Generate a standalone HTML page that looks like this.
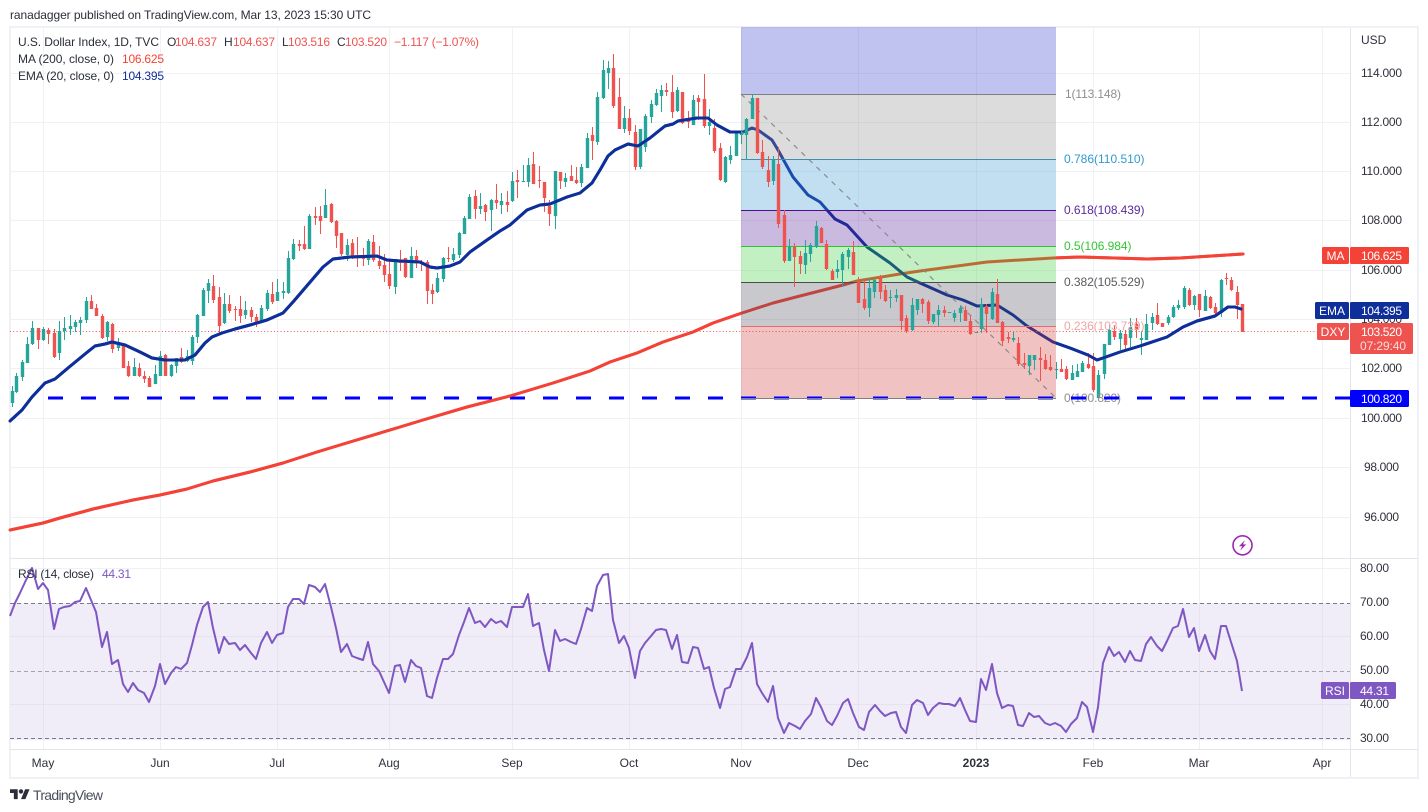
<!DOCTYPE html>
<html lang="en">
<head>
<meta charset="utf-8">
<title>U.S. Dollar Index chart</title>
<style>
html,body{margin:0;padding:0;background:#fff;width:1428px;height:812px;overflow:hidden}
svg{display:block}
text{font-family:"Liberation Sans",sans-serif;font-size:12px;fill:#2a2e39}
.ax{fill:#2f323c}
.w{fill:#fff;text-anchor:middle}
.t{text-anchor:middle;fill:#2f323c}
</style>
</head>
<body>
<svg width="1428" height="812" viewBox="0 0 1428 812" xmlns="http://www.w3.org/2000/svg">
<defs>
<path id="ma" fill="none" stroke="#f44336" stroke-width="3" stroke-linejoin="round" stroke-linecap="round" d="M10 530L43 523L60 518L93 509L133 500L160 495L187 489L213 481L250 472L283 463L317 452L350 442L400 427L423 420L467 407L510 396L553 383L590 371L610 362L637 353L663 342L693 332L713 323L742 313L773 303L800 296L843 285L857 281L900 274L920 271L987 262L1053 258L1080 257L1147 259L1180 258L1243 254"/>
<path id="ema" fill="none" stroke="#0e2f9a" stroke-width="3" stroke-linejoin="round" stroke-linecap="round" d="M10 421L22 410L32 397L45 383L55 379L68 368L85 354L95 346L105 344L112 342L125 345L140 352L152 358L165 360L185 360L195 355L205 343L212 337L222 333L235 329L250 325L267 320L283 313L293 302L305 288L323 267L333 259L350 257L377 256L387 260L400 261L420 262L430 267L437 268L450 266L460 262L470 252L487 240L500 231L510 225L527 210L540 205L550 204L567 197L580 193L592 183L600 170L608 156L615 150L628 144L638 146L650 138L665 126L673 124L678 121L697 118L708 118L717 125L730 132L743 132L752 128L758 130L772 140L778 150L793 177L808 195L820 202L835 219L847 225L867 247L890 263L907 277L920 283L947 295L963 300L977 306L997 305L1013 315L1027 326L1053 342L1070 348L1088 355L1097 360L1103 358L1120 352L1140 346L1167 337L1183 327L1197 321L1215 316L1228 307L1235 307L1241 309"/>
<clipPath id="out"><path d="M10 27H741V558H10ZM1056 27H1350V558H1056Z"/></clipPath>
</defs>

<rect width="1428" height="812" fill="#fff"/>
<text x="10" y="19" textLength="361" lengthAdjust="spacing" fill="#2a2e39">ranadagger published on TradingView.com, Mar 13, 2023 15:30 UTC</text>

<!-- frame -->
<rect x="10" y="27" width="1408" height="751" fill="#fff" stroke="#f0f1f7" stroke-width="2"/>

<!-- grid -->
<path fill="none" stroke="#f0f1f5" stroke-width="1" d="M10 73.5H1350M10 122.5H1350M10 171.5H1350M10 220.5H1350M10 270.5H1350M10 319.5H1350M10 368.5H1350M10 418.5H1350M10 467.5H1350M10 517.5H1350M43.5 28V749M160.5 28V749M277.5 28V749M389.5 28V749M512.5 28V749M629.5 28V749M741.5 28V749M858.5 28V749M976.5 28V749M1093.5 28V749M1199.5 28V749M1322.5 28V749M10 568.5H1350"/>

<!-- RSI band -->
<rect x="10" y="603" width="1340" height="137" fill="#f0ecf8"/>
<path fill="none" stroke="#e6e2ee" stroke-width="1" d="M10 636.5H1350M10 704.5H1350M43.5 603V740M160.5 603V740M277.5 603V740M389.5 603V740M512.5 603V740M629.5 603V740M741.5 603V740M858.5 603V740M976.5 603V740M1093.5 603V740M1199.5 603V740M1322.5 603V740"/>
<path fill="none" stroke="#787b86" stroke-width="1" stroke-dasharray="4 3" d="M10 603.5H1350M10 738.5H1350"/>
<path fill="none" stroke="#a5a5ae" stroke-width="1" stroke-dasharray="4 3" d="M10 671.5H1350"/>

<!-- MA / EMA under fib -->
<use href="#ma"/>
<use href="#ema"/>

<!-- fib fills -->
<rect x="741" y="27" width="315" height="67" fill="rgb(48,55,201)" fill-opacity=".3"/>
<rect x="741" y="94" width="315" height="65" fill="rgb(138,138,138)" fill-opacity=".3"/>
<rect x="741" y="159" width="315" height="51" fill="rgb(52,148,212)" fill-opacity=".3"/>
<rect x="741" y="210" width="315" height="36" fill="rgb(82,28,148)" fill-opacity=".3"/>
<rect x="741" y="246" width="315" height="36" fill="rgb(52,205,52)" fill-opacity=".3"/>
<rect x="741" y="282" width="315" height="44" fill="rgb(72,72,88)" fill-opacity=".3"/>
<rect x="741" y="326" width="315" height="72" fill="rgb(205,52,52)" fill-opacity=".3"/>

<!-- dotted last price -->
<path fill="none" stroke="#ef5350" stroke-width="1" stroke-dasharray="1 2.3" d="M10 331.5H1350"/>

<!-- blue support -->
<path fill="none" stroke="#0000ff" stroke-width="3" stroke-dasharray="15 18" d="M48 398H1350"/>

<!-- fib lines -->
<path fill="none" stroke="#808080" stroke-width="1" d="M741 94.5H1056"/>
<path fill="none" stroke="#3d8fb8" stroke-width="1" d="M741 159.5H1056"/>
<path fill="none" stroke="#4a0f91" stroke-width="1" d="M741 210.5H1056"/>
<path fill="none" stroke="#2cc62c" stroke-width="1" d="M741 246.5H1056"/>
<path fill="none" stroke="#4a4a50" stroke-width="1" d="M741 282.5H1056"/>
<path fill="none" stroke="#e86b6b" stroke-width="1" d="M741 326.5H1056"/>
<path fill="none" stroke="#808080" stroke-width="1" d="M741 398.5H1056"/>
<path fill="none" stroke="#8a8a8a" stroke-width="1.2" stroke-dasharray="5 5.5" d="M741 94L1056 398"/>

<!-- green wicks -->
<path fill="none" stroke="#26a69a" stroke-width="1" d="M12.5 386V407M16.5 373V393M22.5 360V381M27.5 337V363M32.5 321V345M43.5 327V341M59.5 321V360M64.5 317V340M70.5 315V335M75.5 320V332M80.5 317V335M86.5 297V323M107.5 321V341M118.5 338V351M134.5 358V376M155.5 365V384M160.5 351V376M171.5 364V377M176.5 358V373M187.5 350V362M192.5 335V365M197.5 314V343M203.5 288V316M208.5 279V303M224.5 293V324M245.5 301V319M261.5 305V323M267.5 290V311M277.5 279V301M283.5 282V299M288.5 251V294M293.5 239V260M309.5 214V249M325.5 189V218M347.5 239V261M368.5 239V265M395.5 262V294M411.5 247V278M437.5 273V293M443.5 257V282M453.5 248V262M459.5 232V258M464.5 216V234M469.5 194V219M480.5 193V214M491.5 199V231M501.5 193V214M512.5 172V202M523.5 165V182M528.5 158V187M555.5 171V229M565.5 173V187M581.5 164V187M587.5 133V168M597.5 92V145M603.5 60V99M608.5 61V89M624.5 106V133M640.5 129V169M645.5 114V152M651.5 100V123M656.5 89V106M661.5 85V112M677.5 87V112M693.5 95V125M709.5 109V135M725.5 156V183M730.5 146V164M736.5 131V156M741.5 130V144M746.5 118V160M752.5 94V119M773.5 156V185M789.5 239V261M805.5 240V274M810.5 243V262M816.5 221V248M837.5 260V278M842.5 252V287M848.5 248V269M869.5 278V317M874.5 279V298M890.5 290V308M896.5 289V302M912.5 298V331M917.5 299V315M933.5 314V324M938.5 305V326M954.5 310V322M960.5 306V322M981.5 298V333M992.5 288V320M1013.5 332V342M1029.5 355V375M1034.5 355V370M1056.5 362V379M1072.5 365V380M1077.5 364V377M1082.5 361V372M1098.5 370V398M1104.5 344V379M1109.5 325V345M1120.5 330V350M1130.5 318V347M1141.5 331V355M1146.5 314V340M1152.5 313V330M1168.5 315V325M1173.5 305V318M1178.5 300V310M1184.5 286V309M1194.5 295V310M1205.5 290V311M1221.5 279V317"/>
<!-- green bodies -->
<path fill="none" stroke="#26a69a" stroke-width="3.4" d="M12.5 391V403M16.5 376V392M22.5 362V377M27.5 344V363M32.5 328V344M43.5 329V340M59.5 331V353M64.5 328V331M70.5 326V329M75.5 322V327M80.5 320V323M86.5 301V320M107.5 322V337M118.5 344V348M134.5 367V376M155.5 374V384M160.5 356V376M171.5 365V376M176.5 358V366M187.5 356V361M192.5 337V361M197.5 315V337M203.5 290V316M208.5 283V291M224.5 304V323M245.5 310V315M261.5 308V322M267.5 293V309M277.5 292V301M283.5 291V293M288.5 258V293M293.5 244V259M309.5 216V249M325.5 205V218M347.5 245V255M368.5 241V260M395.5 262V287M411.5 256V278M437.5 278V292M443.5 258V279M453.5 254V260M459.5 233V255M464.5 218V234M469.5 197V219M480.5 206V209M491.5 200V210M501.5 201V205M512.5 181V201M523.5 181V182M528.5 165V182M555.5 171V216M565.5 178V182M581.5 167V183M587.5 138V168M597.5 97V142M603.5 70V98M608.5 68V73M624.5 118V129M640.5 129V167M645.5 116V147M651.5 104V117M656.5 93V105M661.5 90V96M677.5 90V111M693.5 100V125M709.5 122V126M725.5 157V182M730.5 155V160M736.5 131V156M741.5 132V135M746.5 119V135M752.5 98V119M773.5 160V181M789.5 247V261M805.5 253V265M810.5 245V254M816.5 226V247M837.5 269V272M842.5 254V270M848.5 250V257M869.5 288V308M874.5 280V292M890.5 297V298M896.5 295V298M912.5 305V330M917.5 299V310M933.5 314V322M938.5 310V315M949.5 312V313M954.5 313V318M960.5 308V313M976.5 332V333M981.5 304V329M992.5 292V319M1013.5 338V340M1029.5 355V366M1034.5 355V360M1056.5 369V370M1072.5 373V380M1077.5 371V377M1082.5 363V372M1098.5 375V398M1104.5 344V374M1109.5 330V345M1120.5 333V339M1130.5 327V338M1141.5 338V340M1146.5 324V340M1152.5 317V323M1168.5 317V323M1173.5 307V317M1178.5 305V308M1184.5 288V307M1194.5 296V305M1205.5 296V311M1221.5 280V313"/>
<!-- red wicks -->
<path fill="none" stroke="#ef5350" stroke-width="1" d="M38.5 328V349M48.5 328V344M54.5 329V358M91.5 295V309M96.5 304V316M102.5 314V339M112.5 323V353M123.5 344V368M128.5 361V377M139.5 363V377M144.5 371V383M149.5 376V387M165.5 354V376M181.5 348V363M213.5 275V303M219.5 287V333M229.5 295V313M235.5 306V321M240.5 296V323M251.5 307V322M256.5 314V327M272.5 282V304M299.5 240V251M304.5 226V250M315.5 207V225M320.5 206V234M331.5 203V223M336.5 220V248M341.5 233V256M352.5 239V259M357.5 237V267M363.5 248V266M373.5 235V262M379.5 246V269M384.5 254V282M389.5 260V289M400.5 250V271M405.5 258V278M416.5 250V268M421.5 260V271M427.5 260V304M432.5 284V304M448.5 247V262M475.5 190V219M485.5 204V221M496.5 184V209M507.5 191V212M517.5 170V198M533.5 152V184M539.5 166V188M544.5 182V212M549.5 200V226M560.5 172V189M571.5 165V181M576.5 167V184M592.5 127V160M613.5 54V108M619.5 78V129M629.5 109V135M635.5 125V170M666.5 83V96M672.5 75V118M682.5 92V124M688.5 111V128M698.5 95V120M704.5 74V128M714.5 119V153M720.5 143V181M757.5 98V154M762.5 140V169M768.5 156V187M778.5 147V228M784.5 210V263M794.5 243V287M800.5 251V274M821.5 227V243M826.5 240V270M832.5 269V280M853.5 241V275M858.5 277V303M864.5 279V310M880.5 275V299M885.5 285V302M901.5 295V330M906.5 315V333M922.5 298V313M928.5 300V324M944.5 306V317M965.5 306V321M970.5 315V335M986.5 304V333M997.5 279V323M1002.5 321V346M1008.5 332V343M1018.5 337V366M1024.5 353V369M1040.5 347V381M1045.5 354V370M1050.5 355V371M1061.5 359V372M1066.5 366V380M1088.5 353V369M1093.5 353V392M1114.5 325V340M1125.5 330V352M1136.5 318V338M1157.5 303V325M1162.5 323V327M1189.5 288V306M1199.5 294V317M1210.5 296V309M1215.5 303V314M1226.5 273V285M1231.5 277V291M1237.5 286V319M1242.5 304V332"/>
<!-- red bodies -->
<path fill="none" stroke="#ef5350" stroke-width="3.4" d="M38.5 328V340M48.5 330V334M54.5 333V357M91.5 301V309M96.5 308V316M102.5 316V338M112.5 324V349M123.5 344V368M128.5 366V376M139.5 368V376M144.5 376V379M149.5 378V387M165.5 355V376M181.5 357V362M213.5 286V300M219.5 297V326M229.5 304V311M235.5 309V310M240.5 309V316M251.5 310V317M256.5 317V323M272.5 294V302M299.5 244V246M304.5 244V249M315.5 216V218M320.5 216V221M331.5 204V222M336.5 221V236M341.5 233V254M352.5 243V257M357.5 256V258M363.5 257V259M373.5 242V260M379.5 261V266M384.5 265V275M389.5 274V286M400.5 260V263M405.5 258V277M416.5 256V263M421.5 262V264M427.5 262V291M432.5 290V294M448.5 258V259M475.5 196V209M485.5 205V212M496.5 200V203M507.5 202V205M517.5 180V182M533.5 164V184M539.5 180V181M544.5 182V198M549.5 206V214M560.5 172V181M571.5 176V181M576.5 180V183M592.5 135V141M613.5 68V106M619.5 97V129M629.5 118V131M635.5 132V167M666.5 90V92M672.5 92V112M682.5 92V123M688.5 119V122M698.5 98V102M704.5 99V126M714.5 128V151M720.5 148V180M757.5 98V153M762.5 152V167M768.5 170V182M778.5 164V224M784.5 215V261M794.5 247V257M800.5 256V264M821.5 228V243M826.5 244V269M832.5 271V280M853.5 252V275M858.5 282V303M864.5 299V308M880.5 276V292M885.5 290V301M901.5 295V321M906.5 318V331M922.5 299V304M928.5 302V321M944.5 310V313M965.5 310V321M970.5 321V334M986.5 306V314M997.5 294V323M1002.5 322V341M1008.5 337V339M1018.5 343V364M1024.5 363V365M1040.5 358V360M1045.5 360V369M1050.5 367V370M1061.5 369V372M1066.5 369V379M1088.5 364V368M1093.5 366V390M1114.5 331V337M1125.5 334V345M1136.5 324V330M1157.5 315V324M1162.5 323V327M1189.5 290V305M1199.5 294V310M1210.5 297V308M1215.5 307V313M1226.5 278V279M1231.5 280V290M1237.5 292V305M1242.5 304V332"/>

<!-- MA / EMA on top outside fib -->
<g clip-path="url(#out)">
<use href="#ma"/>
<use href="#ema"/>
</g>

<!-- fib labels -->
<text x="1065" y="98" textLength="56" fill="#8f8f8f" style="fill:#8f8f8f">1(113.148)</text>
<text x="1064" y="163" textLength="80.5" style="fill:#2f9bd0">0.786(110.510)</text>
<text x="1064" y="214" textLength="80.5" style="fill:#5a2a9a">0.618(108.439)</text>
<text x="1064" y="250" textLength="67.5" style="fill:#35c535">0.5(106.984)</text>
<text x="1064" y="286" textLength="80.5" style="fill:#5a5a60">0.382(105.529)</text>
<text x="1064" y="330" textLength="80.5" style="fill:#f0a5a5">0.236(103.729)</text>
<text x="1064" y="402" textLength="57" style="fill:#8f8f8f">0(100.820)</text>
<path fill="none" stroke="#0000ff" stroke-width="3" d="M1071 398H1086M1104 398H1119"/>

<!-- lightning -->
<circle cx="1242.5" cy="545.3" r="9.5" fill="none" stroke="#9c27b0" stroke-width="1.6"/>
<path d="M1244.8 540.2L1239 546.2H1242.2L1240.2 550.6L1246.2 544.4H1243Z" fill="#9c27b0"/>

<!-- RSI -->
<path fill="none" stroke="#7e57c2" stroke-width="2" stroke-linejoin="round" d="M10 616L15 603L20 593L26 580L32 568L38 589L43 583L48 590L54 629L59 609L64 607L70 606L75 602L80 601L86 588L91 600L96 612L102 647L107 632L112 664L118 660L123 684L128 692L133 683L138 690L144 693L149 702L155 686L160 664L165 684L171 673L176 667L181 669L187 663L192 645L197 625L203 607L208 602L213 628L219 653L224 637L229 644L235 643L240 650L245 645L251 653L256 659L261 643L267 632L272 643L277 635L283 633L288 607L293 599L299 599L304 604L309 585L315 587L320 592L325 584L331 607L336 628L341 652L347 644L352 656L357 658L363 660L368 642L373 664L379 671L384 682L389 693L395 666L400 665L405 682L411 660L416 666L421 668L427 696L432 698L437 678L443 659L448 659L453 654L459 635L464 622L469 608L475 623L480 621L485 627L491 619L496 623L501 621L507 627L512 607L517 607L523 607L528 594L533 626L539 623L544 650L549 671L555 630L560 641L565 639L571 642L576 644L581 629L587 608L592 611L597 586L603 575L608 574L613 620L619 643L624 636L629 648L635 678L640 651L645 643L651 636L656 630L661 629L666 630L672 649L677 635L682 662L688 663L693 647L698 648L704 669L709 667L714 688L720 708L725 689L730 687L736 669L741 669L747 657L752 643L757 684L762 693L768 702L773 686L778 718L784 733L789 723L795 726L800 729L805 721L811 714L816 698L821 707L827 721L832 725L837 716L843 703L848 699L853 713L859 727L864 730L869 712L875 705L880 711L885 716L891 713L896 712L901 727L906 733L912 705L917 700L923 703L928 715L933 708L939 703L944 704L949 704L955 706L960 698L965 710L970 721L976 722L981 679L986 690L992 664L997 693L1002 708L1008 705L1013 706L1018 725L1023 726L1029 713L1034 717L1039 716L1045 723L1050 725L1055 723L1061 726L1066 732L1071 724L1077 718L1082 702L1087 707L1093 732L1098 707L1103 663L1109 647L1114 656L1119 652L1125 662L1130 651L1135 660L1141 661L1146 644L1151 637L1157 646L1162 651L1167 641L1173 628L1178 626L1183 609L1189 637L1194 628L1199 651L1205 635L1210 651L1215 659L1221 626L1226 626L1231 642L1237 661L1242 691"/>

<!-- separators -->
<path fill="none" stroke="#e3e4ec" stroke-width="1" d="M10 558.5H1418M10 749.5H1418M1350.5 28V777"/>

<!-- legend -->
<text x="18" y="46" textLength="141">U.S. Dollar Index, 1D, TVC</text>
<text x="167" y="46">O</text>
<text x="175" y="46" textLength="42" style="fill:#ef5350">104.637</text>
<text x="224" y="46">H</text>
<text x="233" y="46" textLength="42" style="fill:#ef5350">104.637</text>
<text x="282" y="46">L</text>
<text x="288" y="46" textLength="42" style="fill:#ef5350">103.516</text>
<text x="337" y="46">C</text>
<text x="345" y="46" textLength="42" style="fill:#ef5350">103.520</text>
<text x="394" y="46" textLength="85" style="fill:#ef5350">−1.117 (−1.07%)</text>
<text x="18" y="63" textLength="96">MA (200, close, 0)</text>
<text x="122" y="63" textLength="42" style="fill:#f44336">106.625</text>
<text x="18" y="80" textLength="96">EMA (20, close, 0)</text>
<text x="122" y="80" textLength="42" style="fill:#0e2f9a">104.395</text>
<text x="18" y="578" textLength="76">RSI (14, close)</text>
<text x="102" y="578" textLength="29" style="fill:#7e57c2">44.31</text>

<!-- price axis -->
<text x="1361" y="44" class="ax">USD</text>
<g class="ax">
<text x="1361" y="77" textLength="41" class="ax">114.000</text>
<text x="1361" y="126" textLength="41" class="ax">112.000</text>
<text x="1361" y="175" textLength="41" class="ax">110.000</text>
<text x="1361" y="224" textLength="41" class="ax">108.000</text>
<text x="1361" y="274" textLength="41" class="ax">106.000</text>
<text x="1361" y="323" textLength="41" class="ax">104.000</text>
<text x="1361" y="372" textLength="41" class="ax">102.000</text>
<text x="1361" y="422" textLength="41" class="ax">100.000</text>
<text x="1364" y="471" textLength="35" class="ax">98.000</text>
<text x="1364" y="521" textLength="35" class="ax">96.000</text>
<text x="1360" y="572" textLength="29" class="ax">80.00</text>
<text x="1360" y="606" textLength="29" class="ax">70.00</text>
<text x="1360" y="640" textLength="29" class="ax">60.00</text>
<text x="1360" y="674" textLength="29" class="ax">50.00</text>
<text x="1360" y="708" textLength="29" class="ax">40.00</text>
<text x="1360" y="742" textLength="29" class="ax">30.00</text>
</g>

<!-- tags -->
<rect x="1322" y="247" width="27" height="17" rx="1.5" fill="#f44336"/>
<rect x="1350" y="247" width="59" height="17" rx="1.5" fill="#f44336"/>
<text x="1335.5" y="260" class="w" style="fill:#fff">MA</text>
<text x="1361" y="260" textLength="41" style="fill:#fff">106.625</text>

<rect x="1315" y="302" width="34" height="17" rx="1.5" fill="#0e2f9a"/>
<rect x="1350" y="302" width="59" height="17" rx="1.5" fill="#0e2f9a"/>
<text x="1332" y="315" class="w" style="fill:#fff">EMA</text>
<text x="1361" y="315" textLength="41" style="fill:#fff">104.395</text>

<rect x="1317" y="323" width="32" height="17" rx="1.5" fill="#ef5350"/>
<rect x="1350" y="323" width="63" height="31" rx="1.5" fill="#ef5350"/>
<text x="1333" y="336" class="w" style="fill:#fff">DXY</text>
<text x="1361" y="336" textLength="41" style="fill:#fff">103.520</text>
<text x="1360" y="350" textLength="46" style="fill:#fbdcdc">07:29:40</text>

<rect x="1350" y="390" width="59" height="17" rx="1.5" fill="#0000ff"/>
<text x="1361" y="403" textLength="41" style="fill:#fff">100.820</text>

<rect x="1321" y="682" width="28" height="17" rx="1.5" fill="#7e57c2"/>
<rect x="1350" y="682" width="46" height="17" rx="1.5" fill="#7e57c2"/>
<text x="1335" y="695" class="w" style="fill:#fff">RSI</text>
<text x="1360" y="695" textLength="29" style="fill:#fff">44.31</text>

<!-- time axis -->
<text x="43" y="767" class="t">May</text>
<text x="160" y="767" class="t">Jun</text>
<text x="277" y="767" class="t">Jul</text>
<text x="389" y="767" class="t">Aug</text>
<text x="512" y="767" class="t">Sep</text>
<text x="629" y="767" class="t">Oct</text>
<text x="741" y="767" class="t">Nov</text>
<text x="858" y="767" class="t">Dec</text>
<text x="976" y="767" class="t" style="font-weight:bold">2023</text>
<text x="1093" y="767" class="t">Feb</text>
<text x="1199" y="767" class="t">Mar</text>
<text x="1322" y="767" class="t">Apr</text>

<!-- logo -->
<g transform="translate(10 787) scale(.55)" fill="#2a2e39">
<path d="M14 22H7V11H0V4h14v18zM28 22h-8l7.5-18h8L28 22z"/>
<circle cx="20" cy="8" r="4"/>
</g>
<text x="33" y="800" textLength="70" style="font-size:14px;fill:#4a4e5a">TradingView</text>
</svg>
</body>
</html>
